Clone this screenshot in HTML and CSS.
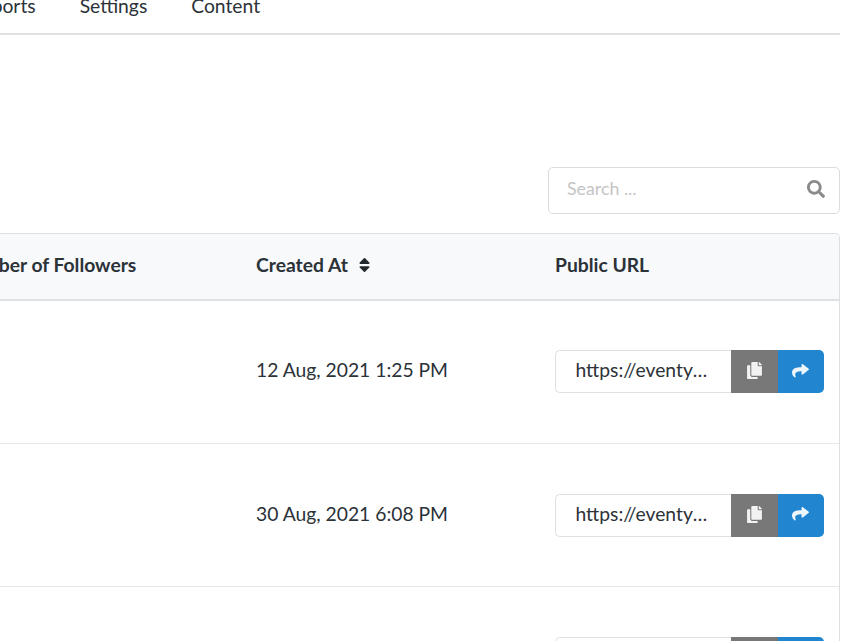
FILE: index.html
```html
<!DOCTYPE html>
<html lang="en">
<head>
<meta charset="utf-8">
<title>Events</title>
<link rel="stylesheet" href="styles.css">
</head>
<body>
<div class="page">
  <nav class="nav">
    <a class="nav-link">Reports</a>
    <a class="nav-link">Settings</a>
    <a class="nav-link">Content</a>
  </nav>
  <div class="toolbar">
    <div class="search">
      <input class="search-input" type="text" placeholder="Search ...">
      <svg class="search-icon" viewBox="0 0 512 512"><path d="M505 442.7L405.3 343c-4.5-4.5-10.6-7-17-7H372c27.6-35.3 44-79.7 44-128C416 93.1 322.9 0 208 0S0 93.1 0 208s93.1 208 208 208c48.3 0 92.7-16.4 128-44v16.3c0 6.4 2.5 12.5 7 17l99.7 99.7c9.4 9.4 24.6 9.4 33.9 0l28.3-28.3c9.4-9.4 9.4-24.6.1-34zM208 336c-70.7 0-128-57.2-128-128 0-70.7 57.2-128 128-128 70.7 0 128 57.2 128 128 0 70.7-57.2 128-128 128z"/></svg>
    </div>
  </div>
  <div class="table">
    <div class="row head">
      <div class="cell">Number of Followers</div>
      <div class="cell">Created At
        <svg class="sort-icon" viewBox="0 0 320 512"><path d="M41 288h238c21.4 0 32.1 25.9 17 41L177 448c-9.4 9.4-24.6 9.4-33.9 0L24 329c-15.1-15.1-4.4-41 17-41zm255-105L177 64c-9.4-9.4-24.6-9.4-33.9 0L24 183c-15.1 15.1-4.4 41 17 41h238c21.4 0 32.1-25.9 17-41z"/></svg>
      </div>
      <div class="cell">Public URL</div>
    </div>
    <div class="row">
      <div class="cell"></div>
      <div class="cell">12 Aug, 2021 1:25 PM</div>
      <div class="cell">
        <div class="url-group">
          <div class="url-text">https://eventyay.com/e/a1b2c3d4</div>
          <button class="btn btn-copy"><svg class="icon-copy" viewBox="0 0 448 512"><path d="M320 448v40c0 13.255-10.745 24-24 24H24c-13.255 0-24-10.745-24-24V120c0-13.255 10.745-24 24-24h72v296c0 30.879 25.121 56 56 56h168zm0-344V0H152c-13.255 0-24 10.745-24 24v368c0 13.255 10.745 24 24 24h272c13.255 0 24-10.745 24-24V128H344c-13.2 0-24-10.8-24-24zm120.971-31.029L375.029 7.029A24 24 0 0 0 358.059 0H352v96h96v-6.059a24 24 0 0 0-7.029-16.97z"/></svg></button>
          <button class="btn btn-share"><svg class="icon-share" viewBox="0 32 512 448" preserveAspectRatio="none"><path d="M503.691 189.836L327.687 37.851C312.281 24.546 288 35.347 288 56.015v80.053C127.371 137.907 0 170.1 0 322.326c0 61.441 39.581 122.309 83.333 154.132 13.653 9.931 33.111-2.533 28.077-18.631C66.066 312.814 132.917 274.316 288 272.085V360c0 20.7 24.3 31.453 39.687 18.164l176.004-152c11.071-9.562 11.086-26.753 0-36.328z"/></svg></button>
        </div>
      </div>
    </div>
    <div class="row">
      <div class="cell"></div>
      <div class="cell">30 Aug, 2021 6:08 PM</div>
      <div class="cell">
        <div class="url-group">
          <div class="url-text">https://eventyay.com/e/e5f6a7b8</div>
          <button class="btn btn-copy"><svg class="icon-copy" viewBox="0 0 448 512"><path d="M320 448v40c0 13.255-10.745 24-24 24H24c-13.255 0-24-10.745-24-24V120c0-13.255 10.745-24 24-24h72v296c0 30.879 25.121 56 56 56h168zm0-344V0H152c-13.255 0-24 10.745-24 24v368c0 13.255 10.745 24 24 24h272c13.255 0 24-10.745 24-24V128H344c-13.2 0-24-10.8-24-24zm120.971-31.029L375.029 7.029A24 24 0 0 0 358.059 0H352v96h96v-6.059a24 24 0 0 0-7.029-16.97z"/></svg></button>
          <button class="btn btn-share"><svg class="icon-share" viewBox="0 32 512 448" preserveAspectRatio="none"><path d="M503.691 189.836L327.687 37.851C312.281 24.546 288 35.347 288 56.015v80.053C127.371 137.907 0 170.1 0 322.326c0 61.441 39.581 122.309 83.333 154.132 13.653 9.931 33.111-2.533 28.077-18.631C66.066 312.814 132.917 274.316 288 272.085V360c0 20.7 24.3 31.453 39.687 18.164l176.004-152c11.071-9.562 11.086-26.753 0-36.328z"/></svg></button>
        </div>
      </div>
    </div>
    <div class="row">
      <div class="cell"></div>
      <div class="cell"></div>
      <div class="cell">
        <div class="url-group">
          <div class="url-text">https://eventyay.com/e/c9d0e1f2</div>
          <button class="btn btn-copy"></button>
          <button class="btn btn-share"></button>
        </div>
      </div>
    </div>
  </div>
</div>
</body>
</html>
```
FILE: styles.css
```css
html, body {
  margin: 0;
  height: 100%;
  overflow: hidden;
  background: #fff;
}

body {
  font-family: Lato, "Noto Sans", sans-serif;
  font-size: 19.3px;
  color: #2b3238;
}

.page {
  width: 900px;
  margin: -20px 0 0 -60px;
}

.nav {
  display: flex;
  gap: 44px;
  height: 53px;
  padding-left: 30px;
  border-bottom: 2px solid #e0e1e2;
}

.nav-link {
  display: block;
  height: 53px;
  line-height: 52px;
}

.toolbar {
  display: flex;
  justify-content: flex-end;
  margin-top: 132px;
}

.search {
  display: flex;
  align-items: center;
  width: 292px;
  height: 47px;
  box-sizing: border-box;
  border: 1px solid #dcdcdc;
  border-radius: 5px;
  background: #fff;
  padding: 0 14px 4px 18px;
}

.search-input {
  flex: 1;
  min-width: 0;
  border: 0;
  outline: 0;
  padding: 0;
  margin-bottom: 2px;
  background: transparent;
  font: inherit;
  font-size: 17.8px;
  color: inherit;
}

.search-input::placeholder {
  color: #c4c4c4;
  opacity: 1;
}

.search-icon {
  width: 18px;
  height: 18px;
  fill: #8a8a8a;
}

.table {
  margin-top: 19px;
  border: 1px solid #dedfe0;
  border-radius: 5px 5px 0 0;
  border-left: 0;
  border-bottom: 0;
}

.row {
  display: grid;
  grid-template-columns: 300px 299px 1fr;
  align-items: center;
  height: 143.2px;
  box-sizing: border-box;
  border-bottom: 1px solid #e6e7e8;
}

.row.head {
  height: 67px;
  background: #f8f9fb;
  border-bottom: 2px solid #e0e1e3;
  border-radius: 5px 5px 0 0;
  font-weight: 700;
}

.cell {
  padding: 0 15px 4.5px 16px;
  white-space: nowrap;
}

.cell:first-child {
  padding-left: 17px;
}

.cell:has(.url-group) {
  padding-bottom: 0;
}

.sort-icon {
  width: 13px;
  height: 18px;
  margin-left: 5px;
  vertical-align: -2.5px;
  fill: #23282d;
}

.url-group {
  display: flex;
  height: 43px;
  width: 269px;
  margin-bottom: 0.4px;
}

.url-text {
  flex: 1;
  min-width: 0;
  box-sizing: border-box;
  border: 1px solid #e0e0e0;
  border-right: 0;
  border-radius: 5px 0 0 5px;
  padding: 0 20px 0 19.5px;
  line-height: 37.5px;
  overflow: hidden;
  text-overflow: ellipsis;
  white-space: nowrap;
}

.btn {
  display: flex;
  align-items: center;
  justify-content: center;
  width: 46.5px;
  padding: 0;
  border: 0;
  color: #fff;
}

.btn-copy {
  background: #787878;
}

.btn-share {
  background: #2185d0;
  border-radius: 0 5px 5px 0;
}

.icon-copy {
  width: 15px;
  height: 17px;
  margin-bottom: 2px;
  fill: #f2f2f2;
}

.icon-share {
  width: 17px;
  height: 13.5px;
  margin-bottom: 2px;
  fill: #eef6fc;
}
```
